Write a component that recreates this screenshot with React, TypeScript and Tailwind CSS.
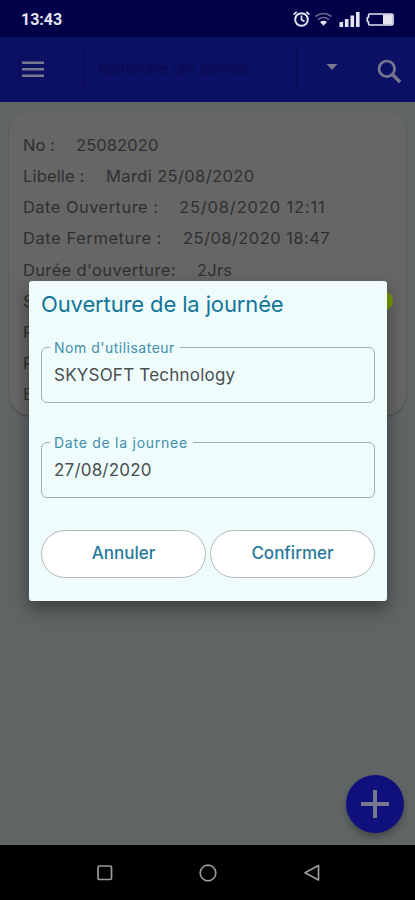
import React from "react";

const rows = [
    { label: "No :", value: "25082020", labelClass: "w-[53px]", valueClass: "tracking-[0.1px]" },
    { label: "Libelle :", value: "Mardi 25/08/2020", labelClass: "w-[83px] tracking-[0.15px]", valueClass: "tracking-[0.38px]" },
    { label: "Date Ouverture :", value: "25/08/2020 12:11", labelClass: "w-[156px] tracking-[0.45px]", valueClass: "tracking-[0.84px]" },
    { label: "Date Fermeture :", value: "25/08/2020 18:47", labelClass: "w-[160px] tracking-[0.57px]", valueClass: "tracking-[0.45px]" },
    { label: "Durée d'ouverture:", value: "2Jrs", labelClass: "w-[174px] tracking-[0.35px]", valueClass: "tracking-[0.2px]" },
    { label: "S", value: "", labelClass: "", valueClass: "" },
    { label: "R", value: "", labelClass: "", valueClass: "" },
    { label: "R", value: "", labelClass: "", valueClass: "" },
    { label: "E", value: "", labelClass: "", valueClass: "" },
];

const StatusBar = () => (
    <div className="h-[37px] shrink-0 bg-[#020048] flex items-center justify-between pl-[21px] pr-[20px] text-[#e4e4f0]">
        <span className="font-[Roboto] font-bold text-[16px] leading-none pt-[3px]">13:43</span>
        <svg width="106" height="20" viewBox="0 0 106 20" fill="none" stroke="currentColor" className="mt-[1px]">
            {/* alarm */}
            <circle cx="12.500" cy="10.500" r="6.300" strokeWidth="2" />
            <path d="M12.500 6.500v4.300l3 1.800M4.700 5.500l3-2.700M20.300 5.500l-3-2.700" strokeWidth="1.700" />
            {/* wifi */}
            <path d="M26.500 7.500q8-6 16 0M29 10.500q5.500-4 11 0" strokeWidth="1.600" opacity=".45" />
            <path d="M31 13q3.500-2.500 7 0l-3.500 3.800z" fill="currentColor" stroke="none" />
            {/* signal */}
            <path d="M52.300 18v-5M57.700 18v-8M63.300 18v-11.500M68.800 18v-15" strokeWidth="3.600" />
            {/* battery */}
            <path d="M81 5h21.500q1.500 0 1.500 1.500v8q0 1.500-1.500 1.500h-21.500q-1.500 0-1.500-1.500v-1.500l-1.200-1v-3l1.200-1v-1.500q0-1.500 1.500-1.500z" strokeWidth="1.700" />
            <path d="M94 5.500h9v10h-9z" fill="currentColor" stroke="none" />
        </svg>
    </div>
);

const Toolbar = () => (
    <div className="h-[65px] shrink-0 bg-[#0b1064] flex items-center">
        <svg width="24" height="18" viewBox="0 0 24 18" className="ml-[21px] mb-px" stroke="#777890" strokeWidth="2.400">
            <path d="M1 2.700h22M1 9.200h22M1 15.700h22" />
        </svg>
        <div className="ml-[38px] w-[214px] h-[43px] mb-[6px] border border-[#080b4c] border-b-[#0a0e5c] pl-[14px] flex items-center">
            <span className="text-[13px] tracking-[0.08px] text-[#080b4c] whitespace-nowrap pt-[6px]">Rechercher une journée</span>
        </div>
        <svg width="12" height="6" viewBox="0 0 12 6" className="ml-[29px] mb-[6px]">
            <path d="M0.500 0h11l-5.500 6z" fill="#777890" />
        </svg>
        <svg width="25" height="25" viewBox="0 0 25 25" fill="none" stroke="#777890" className="ml-[39px] mt-[4px]">
            <circle cx="9.800" cy="9.800" r="7.800" strokeWidth="2.700" />
            <path d="M15.500 15.500l7.500 7.500" strokeWidth="3.400" />
        </svg>
    </div>
);

const Field = ({ label, value, labelClass, valueClass }: { label: string; value: string; labelClass: string; valueClass: string }) => (
    <fieldset className="h-[63px] border border-[#a5acac] rounded-[6px] pl-[8px] min-w-0">
        <legend className={`pl-[4px] pr-[5px] h-[14px] leading-[16px] text-[14px] whitespace-nowrap text-[#438eab] ${labelClass}`}>{label}</legend>
        <div className={`pl-[4px] pt-[10px] leading-[22px] text-[17px] whitespace-nowrap text-[#4a4e50] ${valueClass}`}>{value}</div>
    </fieldset>
);

const OpenDayDialog = () => (
    <div className="absolute left-[29px] top-[281px] w-[358px] h-[320px] bg-[#effcfc] rounded-[3px] px-[12px] flex flex-col shadow-[0_8px_18px_rgba(0,0,0,0.4)]">
        <h2 className="mt-[8px] h-[30px] leading-[30px] text-[22px] tracking-[-0.13px] whitespace-nowrap text-[#14759b]">Ouverture de la journée</h2>
        <div className="mt-[21px]">
            <Field label="Nom d'utilisateur" value="SKYSOFT Technology" labelClass="tracking-[0.5px]" valueClass="tracking-[0.22px]" />
        </div>
        <div className="mt-[32px]">
            <Field label="Date de la journee" value="27/08/2020" labelClass="tracking-[0.74px]" valueClass="tracking-[0.2px]" />
        </div>
        <div className="mt-[32px] flex gap-[4px]">
            <button className="flex-1 h-[48px] rounded-full border border-[#b3b8b8] bg-white text-[17px] font-medium text-[#26799b]">Annuler</button>
            <button className="flex-1 h-[48px] rounded-full border border-[#b3b8b8] bg-white text-[17px] font-medium text-[#26799b]">Confirmer</button>
        </div>
    </div>
);

const NavBar = () => (
    <div className="h-[55px] shrink-0 bg-black flex items-center justify-center">
        <svg width="224" height="20" viewBox="0 0 224 20" fill="none" stroke="#9a9a9a" strokeWidth="1.700">
            <rect x="2" y="3" width="13.500" height="13.500" rx="1.500" />
            <circle cx="112" cy="10" r="7.800" />
            <path d="M222.500 2.500v14.500l-13.500-7.200z" strokeLinejoin="round" />
        </svg>
    </div>
);

export default function App() {
    return (
        <div className="relative w-[415px] h-[900px] overflow-hidden bg-[#5f6565] flex flex-col font-[Inter,sans-serif]">
            <StatusBar />
            <Toolbar />
            <main className="relative flex-1 px-[9px] pt-[8px]">
                <div className="h-[306px] rounded-[22px] bg-[#666666] pl-[14px] pr-[13px] pt-[20px] shadow-[0_1px_2px_rgba(0,0,0,0.25)] text-[16.5px] text-[#303030]">
                    {rows.map((row, i) => (
                        <div key={i} className="h-[31.100px] flex items-center whitespace-nowrap">
                            <span className={row.labelClass}>{row.label}</span>
                            <span className={row.valueClass}>{row.value}</span>
                            {i === 5 && <span className="ml-auto size-[20px] shrink-0 rounded-full bg-[#789a00]" />}
                        </div>
                    ))}
                </div>
                <button className="absolute right-[11px] bottom-[12px] size-[58px] rounded-full bg-[#10107c] shadow-[0_4px_6px_rgba(0,0,0,0.3)] flex items-center justify-center">
                    <svg width="28" height="28" viewBox="0 0 28 28" stroke="#77778f" strokeWidth="4">
                        <path d="M14 0v28M0 14h28" />
                    </svg>
                </button>
            </main>
            <NavBar />
            <OpenDayDialog />
        </div>
    );
}
